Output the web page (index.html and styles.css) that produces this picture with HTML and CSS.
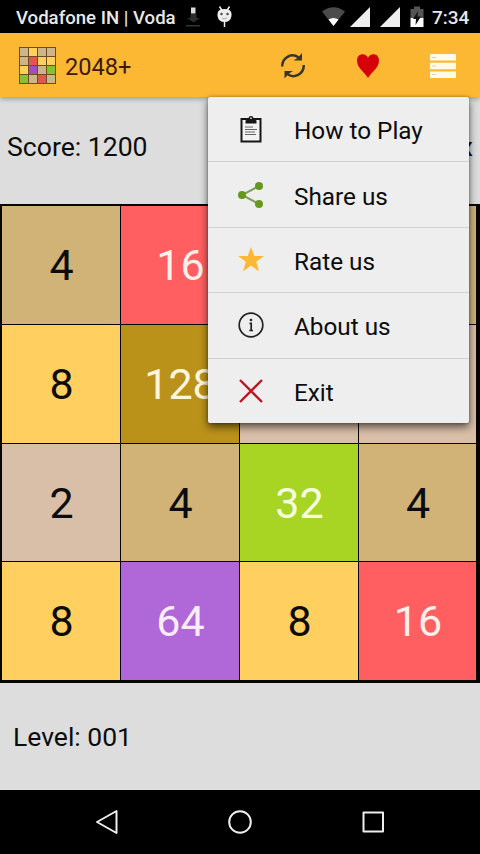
FILE: index.html
```html
<!DOCTYPE html>
<html lang="en">
<head>
<meta charset="utf-8">
<title>2048+</title>
<link rel="stylesheet" href="styles.css">
</head>
<body>
<div class="screen">
  <header class="status">
    <span class="carrier">Vodafone IN | Voda</span>
    <svg class="status-left" width="54" height="33" viewBox="182 0 54 33">
      <path d="M190.500 14h6v4h3.500l-6.500 4.500-6.500-4.500h3.500z" fill="#2c2c2c"/>
      <rect x="191" y="7.500" width="4.500" height="6" fill="#ddd"/>
      <rect x="186" y="25" width="14" height="1.500" fill="#333"/>
      <path d="M219.500 6.500l2.500 4M229.500 6.500l-2.500 4M224.500 20v7" stroke="#eee" stroke-width="1.500"/>
      <path d="M217.500 14q0-5 7-5t7 5v2q-1 6-7 6t-7-6z" fill="#eee"/>
      <circle cx="221.500" cy="14" r="1.200" fill="#444"/><circle cx="227.500" cy="14" r="1.200" fill="#444"/>
      <path d="M222 18q2.500 1.500 5 0" stroke="#aaa" fill="none"/>
    </svg>
    <svg class="status-right" width="104" height="33" viewBox="320 0 104 33">
      <path d="M322 11.500Q333.500 3 345 11.500L333.500 26z" fill="#4b4b4b"/>
      <path d="M328.500 19.500Q333.500 16.500 338.500 19.500L333.500 26z" fill="#fff"/>
      <path d="M350 27L370 7v20zM380 27L400 7v20z" fill="#eee"/>
      <path d="M414 6.500h6v2.500h3.500v9h-13v-9h3.500z" fill="#555"/>
      <path d="M410.500 18h13v9h-13z" fill="#fff"/>
      <path d="M418 11l-5 8h3L415.500 25l5.500-8.500h-3.500z" fill="#111"/>
    </svg>
    <span class="clock">7:34</span>
  </header>

  <div class="appbar">
    <div class="logo">
      <i class="g"></i><i class="y"></i><i class="g"></i><i class="g"></i>
      <i class="g"></i><i class="r"></i><i class="y"></i><i class="y"></i>
      <i class="y"></i><i class="p"></i><i class="g"></i><i class="l"></i>
      <i class="l"></i><i class="g"></i><i class="r"></i><i class="g"></i>
    </div>
    <h1 class="title">2048+</h1>
    <div class="actions">
      <svg width="26" height="28" viewBox="280 52 26 28" fill="none" stroke="#3a352c" stroke-width="2.500">
        <path d="M282.200 66.500C282.200 57 292 52.500 298.500 57.500M303.800 65C303.800 74.500 294 79 287.500 74"/>
        <path d="M302 53v7.500h-8.500l4-2.500zM284.500 78.500v-7.500h8.500l-4 2.500z" fill="#3a352c" stroke="none"/>
      </svg>
      <svg width="24" height="26" viewBox="0 0 24 26"><path d="M12 25C9 19.500 1 15 1 7.500C1 0 10 -0.500 12 5C14 -0.500 23 0 23 7.500C23 15 15 19.500 12 25z" fill="#d50008"/></svg>
      <svg width="26" height="24" viewBox="0 0 26 24"><path d="M0 0h26v6.500H0zM0 8.700h26v6.500H0zM0 17.500h26V24H0z" fill="#fffbe8"/><path d="M2 3.500h4M2 12h4M2 20.500h4" stroke="#e6cf9a" stroke-width="1.200"/></svg>
    </div>
  </div>

  <div class="score"><span>Score: 1200</span><span>x</span></div>

  <main class="board">
    <div class="tile t4">4</div><div class="tile t16">16</div><div class="tile t4"></div><div class="tile t4"></div>
    <div class="tile t8">8</div><div class="tile t128">128</div><div class="tile t2"></div><div class="tile t2"></div>
    <div class="tile t2">2</div><div class="tile t4">4</div><div class="tile t32">32</div><div class="tile t4">4</div>
    <div class="tile t8">8</div><div class="tile t64">64</div><div class="tile t8">8</div><div class="tile t16">16</div>
  </main>

  <div class="level">Level: 001</div>

  <nav class="nav">
    <svg width="480" height="64" viewBox="0 790 480 64" fill="none" stroke="#eee" stroke-width="2" stroke-linejoin="round">
      <path d="M97 822L116.500 811v22z"/><circle cx="240" cy="822" r="10.800"/><rect x="363.500" y="812.500" width="19.500" height="19"/>
    </svg>
  </nav>

  <div class="menu">
    <div class="item">
      <svg width="28" height="28" viewBox="0 0 28 28"><path d="M4.500 4h19v22.500h-19z" fill="#f2f2f2" stroke="#161616" stroke-width="2"/><path d="M8.500 8.500V5.500l3-1.500q0-3 2.500-3t2.500 3l3 1.500v3z" fill="#161616"/><circle cx="14" cy="3.200" r=".9" fill="#ddd"/><path d="M8 12h8M8 14.500h12M8 17h10M8 19.500h11" stroke="#666"/></svg>
      <span>How to Play</span>
    </div>
    <div class="item">
      <svg width="28" height="28" viewBox="0 0 28 28"><path d="M22 5L5 14l17 9" fill="none" stroke="#7d9c55" stroke-width="2"/><g fill="#65981c"><circle cx="22" cy="5" r="4"/><circle cx="5" cy="14" r="4"/><circle cx="22" cy="23" r="4"/></g></svg>
      <span>Share us</span>
    </div>
    <div class="item">
      <svg width="28" height="28" viewBox="0 0 28 28"><path d="M14 1l3.300 9H27l-7.800 5.800L22 25.500l-8-6-8 6 2.800-9.700L1 10h9.700z" fill="#fdb833"/></svg>
      <span>Rate us</span>
    </div>
    <div class="item">
      <svg width="28" height="28" viewBox="0 0 28 28"><circle cx="14" cy="14" r="11.800" fill="none" stroke="#222" stroke-width="1.700"/><circle cx="14" cy="9" r="1.300" fill="#222"/><path d="M12.500 12.300h1.700V19.500M12.300 19.500h3.700" fill="none" stroke="#222" stroke-width="1.700"/></svg>
      <span>About us</span>
    </div>
    <div class="item">
      <svg width="28" height="28" viewBox="0 0 28 28"><path d="M3 3l22 22M25 3L3 25" stroke="#bf1422" stroke-width="2.400"/></svg>
      <span>Exit</span>
    </div>
  </div>
</div>
</body>
</html>
```
FILE: styles.css
```css
* { box-sizing: border-box; }
body { margin: 0; background: #000; font-family: Roboto, "Liberation Sans", sans-serif; color: #0c0c0c; }
svg { display: block; flex: none; }
.screen { position: relative; width: 480px; height: 854px; overflow: hidden; display: flex; flex-direction: column; background: #ddd; }
.status { height: 33px; flex: none; background: #000; color: #e8e8e8; display: flex; align-items: center; padding-left: 16px; font-size: 18.600px; font-weight: 500; white-space: nowrap; }
.carrier { width: 166px; padding-top: 2px; }
.status-right { margin-left: 84px; }
.clock { margin-left: 8px; padding-top: 2px; font-size: 19px; }
.appbar { height: 64px; flex: none; background: #fdb833; display: flex; align-items: center; padding: 0 24px 0 19px; box-shadow: 0 2px 5px rgba(0,0,0,.3); z-index: 1; }
.logo { width: 37px; height: 37px; padding: 1px; display: grid; grid-template-columns: repeat(4, 1fr); grid-template-rows: repeat(4, 1fr); gap: 1px; background: #704a20; }
.logo i { background: #ccb58b; }
.logo .y { background: #ffd05c; }
.logo .r { background: #e2574f; }
.logo .p { background: #a34dc0; }
.logo .l { background: #83c331; }
.title { margin: 3px 0 0 9px; font-size: 23.600px; font-weight: 400; color: #3b1b05; }
.actions { margin-left: auto; margin-top: 1px; display: flex; align-items: center; gap: 50px; }
.score { height: 107px; flex: none; display: flex; justify-content: space-between; padding: 34px 7px 0 7px; font-size: 26.600px; line-height: 32px; }
.board { flex: none; height: 479px; background: #080400; padding: 2px 4px 3px 2px; display: grid; grid-template-columns: 118px 118px 118px 117px; grid-template-rows: 118px 118px 117px 118px; gap: 1px; }
.tile { display: flex; align-items: center; justify-content: center; font-size: 43px; padding-left: 1px; }
.t2 { background: #d9bfa8; }
.t4 { background: #d1b377; }
.t8 { background: #ffcf60; }
.t16 { background: #ff5f60; color: #fff0ea; }
.t32 { background: #a8d524; color: #f6ffe0; }
.t64 { background: #b067d8; color: #f8edff; }
.t128 { background: #bb9219; color: #fff6df; }
.level { height: 107px; flex: none; padding: 38px 0 0 13px; font-size: 26.500px; line-height: 32px; }
.nav { height: 64px; flex: none; background: #000; }
.menu { position: absolute; left: 208px; top: 97px; width: 261px; height: 326px; z-index: 2; background: #eee; border-radius: 2px; box-shadow: 0 4px 8px rgba(0,0,0,.6), 0 0 3px rgba(0,0,0,.3); display: flex; flex-direction: column; }
.item { flex: 1; display: flex; align-items: center; gap: 29px; padding-left: 29px; font-size: 24.300px; border-bottom: 1px solid #d2d2d2; }
.item:last-child { border-bottom: 0; }
.item span { padding-top: 3px; }
```
